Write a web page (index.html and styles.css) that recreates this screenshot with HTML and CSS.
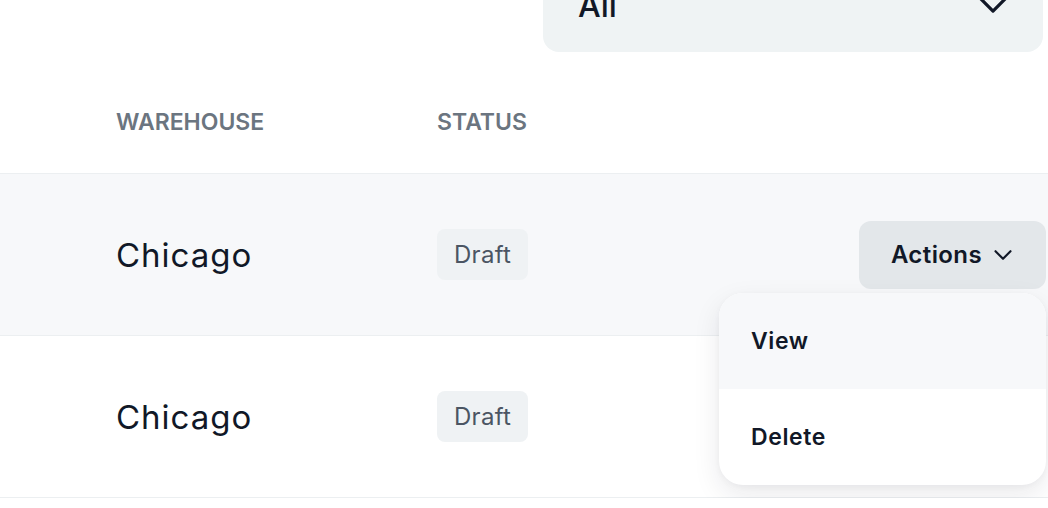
FILE: index.html
```html
<!DOCTYPE html>
<html>

<head>
    <title>Inventory</title>
    <meta name="viewport" content="width=device-width, minimum-scale=1.0" />
    <link rel="stylesheet" href="styles.css">
</head>

<body>
    <div class="toolbar">
        <div class="select">
            <span>All</span>
            <svg class="select-icon" width="48" height="48" viewBox="0 0 24 24" fill="none" stroke="#111827" stroke-width="1.2" stroke-linecap="round" stroke-linejoin="round"><path d="M6 9l6 6 6-6" /></svg>
        </div>
    </div>

    <div class="table">
        <div class="thead">
            <div>WAREHOUSE</div>
            <div>STATUS</div>
            <div></div>
        </div>

        <div class="row active">
            <div class="name">Chicago</div>
            <div><span class="badge">Draft</span></div>
            <div class="actions">
                <button class="btn">Actions
                    <svg width="30" height="30" viewBox="0 0 24 24" fill="none" stroke="#111827" stroke-width="1.7" stroke-linecap="round" stroke-linejoin="round"><path d="M6 9l6 6 6-6" /></svg>
                </button>
                <ul class="menu">
                    <li class="hover">View</li>
                    <li>Delete</li>
                </ul>
            </div>
        </div>

        <div class="row">
            <div class="name">Chicago</div>
            <div><span class="badge">Draft</span></div>
            <div class="actions"></div>
        </div>
    </div>
</body>

</html>
```

FILE: styles.css
```css
html, body {
    margin: 0;
    background: #fff;
    overflow: hidden;
}

body {
    font-family: Inter, "Noto Sans", sans-serif;
    color: #111827;
}

.toolbar {
    display: flex;
    justify-content: flex-end;
    padding-right: 5px;
}

.select {
    display: flex;
    align-items: center;
    justify-content: space-between;
    box-sizing: border-box;
    width: 500px;
    height: 94px;
    margin-top: -42px;
    padding: 0 26px 0 35px;
    background: #eff3f4;
    border-radius: 16px;
    font-size: 32px;
    font-weight: 500;
}

.select-icon {
    margin-top: -4px;
    transform: scale(1.34);
}

.thead,
.row {
    display: grid;
    grid-template-columns: 321px 1fr auto;
    align-items: center;
    padding: 0 2px 0 116px;
    border-bottom: 1px solid #eceff1;
}

.thead {
    padding-top: 56px;
    padding-bottom: 37px;
    line-height: 28px;
    font-size: 23px;
    font-weight: 600;
    color: #6b7580;
}

.row {
    height: 161px;
}

.row.active {
    background: #f7f8fa;
}

.name {
    font-size: 33px;
    letter-spacing: 1px;
}

.badge {
    display: inline-block;
    height: 51px;
    line-height: 52px;
    padding: 0 17px;
    border-radius: 8px;
    background: #eff2f4;
    color: #4b5563;
    font-size: 24px;
    letter-spacing: 0.3px;
}

.actions {
    position: relative;
}

.btn {
    display: flex;
    align-items: center;
    gap: 6px;
    height: 68px;
    padding: 0 28px 0 32px;
    border: 0;
    border-radius: 12px;
    background: #e3e7ea;
    font-family: inherit;
    font-size: 24px;
    font-weight: 600;
    letter-spacing: 0.4px;
    color: #111827;
}

.menu {
    position: absolute;
    top: calc(100% + 4px);
    right: 0;
    width: 327px;
    margin: 0;
    padding: 0;
    list-style: none;
    background: #fff;
    border-radius: 24px;
    overflow: hidden;
    box-shadow: 0 10px 28px rgba(17, 24, 39, 0.09), 0 2px 6px rgba(17, 24, 39, 0.04);
    z-index: 2;
}

.menu li {
    height: 96px;
    line-height: 96px;
    padding-left: 32px;
    font-size: 23px;
    font-weight: 600;
    letter-spacing: 0.6px;
}

.menu li.hover {
    background: #f7f8fa;
}
```
